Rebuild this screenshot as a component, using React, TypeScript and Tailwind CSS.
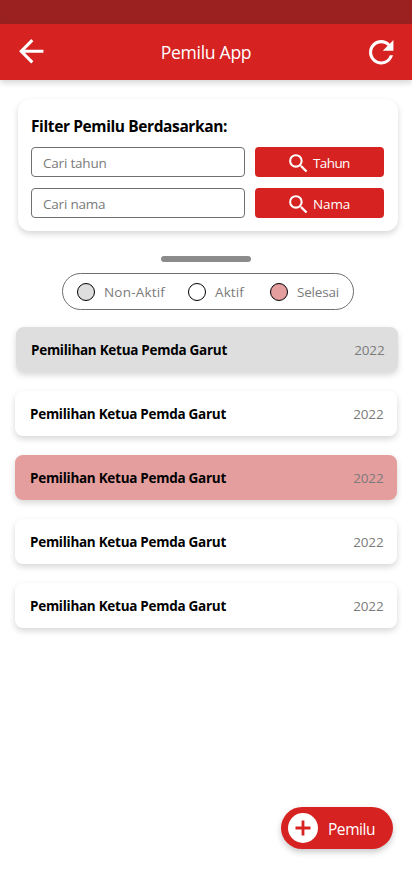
function SearchIcon() {
  return (
    <svg width="25" height="25" viewBox="0 0 24 24" fill="white" className="shrink-0">
      <path d="M15.5 14h-.79l-.28-.27A6.47 6.47 0 0 0 16 9.5 6.5 6.5 0 1 0 9.5 16c1.61 0 3.09-.59 4.23-1.57l.27.28v.79l5 4.99L20.49 19l-4.99-5zm-6 0C7.01 14 5 11.99 5 9.5S7.01 5 9.5 5 14 7.01 14 9.5 11.99 14 9.5 14z" />
    </svg>
  );
}

interface FilterProps {
  placeholder: string;
  label: string;
  labelTracking: string;
}

function FilterRow({ placeholder, label, labelTracking }: FilterProps) {
  return (
    <div className="flex gap-2.5">
      <input
        type="text"
        placeholder={placeholder}
        className="h-[30px] w-[214px] rounded-[4px] border border-[#707070] bg-white pt-0.5 pl-[11px] text-[13.5px] tracking-[-0.2px] placeholder:text-[#7b7b7b]"
      />
      <button className="flex h-[30px] w-[129px] items-center rounded-[4px] bg-[#d62221] pt-0.5 pl-[31px] text-[13.5px] text-white">
        <SearchIcon />
        <span className={`ml-0.5 ${labelTracking}`}>{label}</span>
      </button>
    </div>
  );
}

const legend = [
  { name: "Non-Aktif", item: "w-[111px]", dot: "bg-[#dedede]", text: "tracking-[0.2px]" },
  { name: "Aktif", item: "w-[82px]", dot: "bg-white", text: "tracking-[0.1px]" },
  { name: "Selesai", item: "", dot: "bg-[#e59e9e]", text: "tracking-[-0.2px]" },
];

const rows = [
  { style: "ml-4 bg-[#dedede]", year: 2022 },
  { style: "ml-[15px] bg-white", year: 2022 },
  { style: "ml-[15px] bg-[#e59e9e]", year: 2022 },
  { style: "ml-[15px] bg-white", year: 2022 },
  { style: "ml-[15px] bg-white", year: 2022 },
];

export default function App() {
  return (
    <div className='flex h-[870px] w-[412px] flex-col overflow-hidden bg-white font-["Open_Sans","Noto_Sans",sans-serif]'>
      <div className="h-6 shrink-0 bg-[#9b2121]" />
      <header className="flex h-14 shrink-0 items-center justify-between bg-[#d62221] pr-[12.5px] pl-[12.5px] text-white shadow-[0_3px_6px_rgba(0,0,0,0.16)]">
        <svg width="36.5" height="36.5" viewBox="0 0 24 24" fill="white" className="mb-0.5">
          <path d="M20 11H7.83l5.59-5.59L12 4l-8 8 8 8 1.41-1.41L7.83 13H20v-2z" />
        </svg>
        <h1 className="text-[17.6px] tracking-[-0.3px]">Pemilu App</h1>
        <svg width="36.5" height="36.5" viewBox="0 0 24 24" fill="white">
          <path d="M17.65 6.35A7.958 7.958 0 0 0 12 4a8 8 0 1 0 7.73 10h-2.08A5.99 5.99 0 0 1 12 18c-3.31 0-6-2.69-6-6s2.69-6 6-6c1.66 0 3.14.69 4.22 1.78L13 11h7V4l-2.35 2.35z" />
        </svg>
      </header>

      <section className="mt-[19px] ml-[18px] flex h-[132px] w-[380px] shrink-0 flex-col rounded-xl bg-white pt-[15px] pl-[13px] shadow-[0_3px_6px_rgba(0,0,0,0.16)]">
        <h2 className="h-[33px] text-[15.5px] leading-6 font-bold tracking-[-0.39px]">Filter Pemilu Berdasarkan:</h2>
        <div className="flex flex-col gap-[11px]">
          <FilterRow placeholder="Cari tahun" label="Tahun" labelTracking="tracking-[-0.6px]" />
          <FilterRow placeholder="Cari nama" label="Nama" labelTracking="tracking-[-0.1px]" />
        </div>
      </section>

      <div className="mt-[25px] h-1.5 w-[90px] shrink-0 self-center rounded-full bg-[#8b8b8b]" />

      <div className="mt-[11px] ml-[62px] flex h-[37px] w-[292px] shrink-0 items-center rounded-full border border-[#707070] pl-3.5 text-[13.5px] text-[#7b7b7b]">
        {legend.map((l) => (
          <div key={l.name} className={`flex shrink-0 items-center ${l.item}`}>
            <span className={`size-[18px] shrink-0 rounded-full border border-black ${l.dot}`} />
            <span className={`ml-[9px] pt-0.5 whitespace-nowrap ${l.text}`}>{l.name}</span>
          </div>
        ))}
      </div>

      <div className="mt-[17px] flex flex-col gap-[19px]">
        {rows.map((r, i) => (
          <div
            key={i}
            className={`flex h-[45px] w-[382px] items-center justify-between rounded-lg pt-0.5 pr-[13.5px] pl-[15px] text-[13.5px] shadow-[0_3px_6px_rgba(0,0,0,0.16)] ${r.style}`}
          >
            <span className="font-bold tracking-[-0.28px]">Pemilihan Ketua Pemda Garut</span>
            <span className="tracking-[-0.15px] text-[#7b7b7b]">{r.year}</span>
          </div>
        ))}
      </div>

      <button className="mt-auto mr-[19px] mb-[21px] flex h-[42px] w-28 shrink-0 items-center self-end rounded-full bg-[#d62221] pl-[7px] text-white shadow-[0_3px_6px_rgba(0,0,0,0.22)]">
        <svg width="30" height="30" viewBox="0 0 30 30" className="shrink-0">
          <circle cx="15" cy="15" r="15" fill="white" />
          <path d="M15 7.5v15M7.5 15h15" stroke="#d62221" strokeWidth="2.8" />
        </svg>
        <span className="ml-2.5 pt-[3px] text-[15.5px] tracking-[-0.45px]">Pemilu</span>
      </button>
    </div>
  );
}
